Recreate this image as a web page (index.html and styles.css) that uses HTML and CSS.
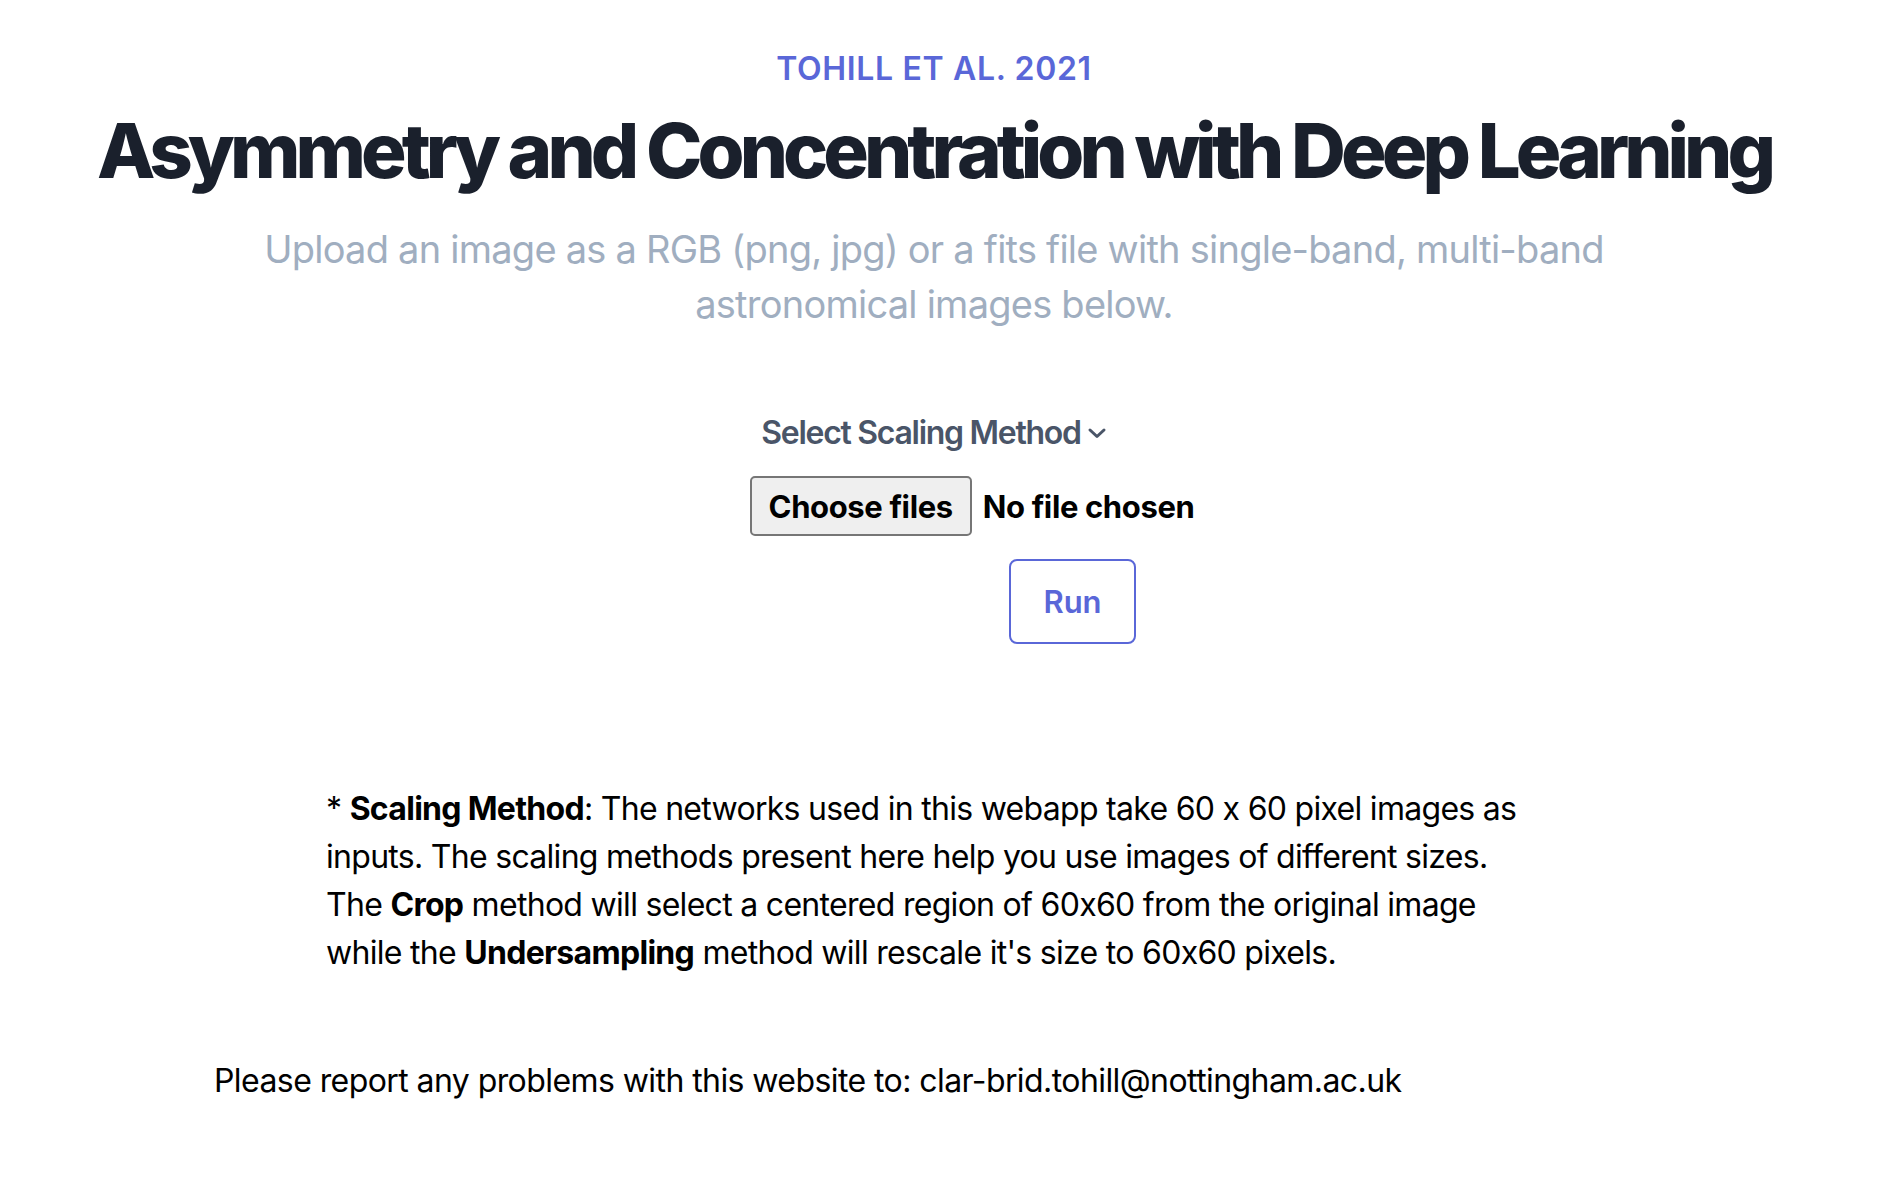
FILE: index.html
```html
<!DOCTYPE html>
<html lang="en">
<head>
<meta charset="utf-8">
<title>Asymmetry and Concentration with Deep Learning</title>
<link rel="stylesheet" href="styles.css">
</head>
<body>
<main class="page">
  <header class="hero">
    <p class="eyebrow">Tohill et al. 2021</p>
    <h1 class="title">Asymmetry and Concentration with Deep Learning</h1>
    <p class="lead">Upload an image as a RGB (png, jpg) or a fits file with single-band, multi-band astronomical images below.</p>
  </header>

  <form class="controls">
    <div class="select">
      <span class="select-label">Select Scaling Method</span>
      <svg class="chevron" width="20" height="12" viewBox="0 0 20 12" aria-hidden="true"><path d="M3 3l7 6.5 7-6.5" fill="none" stroke="#4a5568" stroke-width="3" stroke-linecap="round" stroke-linejoin="round"/></svg>
    </div>
    <div class="file">
      <span class="file-btn">Choose files</span>
      <span class="file-name">No file chosen</span>
    </div>
    <button type="button" class="run">Run</button>
  </form>

  <p class="note">* <strong>Scaling Method</strong>: The networks used in this webapp take 60 x 60 pixel images as inputs. The scaling methods present here help you use images of different sizes. The <strong>Crop</strong> method will select a centered region of 60x60 from the original image while the <strong>Undersampling</strong> method will rescale it's size to 60x60 pixels.</p>

  <p class="footer">Please report any problems with this website to: clar-brid.tohill@nottingham.ac.uk</p>
</main>
</body>
</html>
```

FILE: styles.css
```css
html, body {
  margin: 0;
  padding: 0;
  background: #ffffff;
}

body {
  font-family: Inter, "Liberation Sans", sans-serif;
  font-feature-settings: "calt" 0;
  color: #000000;
}

.page {
  padding: 45px 10px 0 0;
}

.hero {
  display: flex;
  flex-direction: column;
  align-items: center;
  text-align: center;
}

.eyebrow {
  margin: 0;
  font-size: 32px;
  line-height: 48px;
  font-weight: 600;
  letter-spacing: 0.02em;
  text-transform: uppercase;
  color: #5a67d8;
}

.title {
  margin: 19px 0 0;
  font-size: 76px;
  line-height: 76px;
  font-weight: 800;
  letter-spacing: -0.065em;
  white-space: nowrap;
  color: #1a202c;
}

.lead {
  margin: 34px 0 0;
  max-width: 1400px;
  font-size: 38px;
  line-height: 55px;
  font-weight: 400;
  letter-spacing: -0.02em;
  color: #a0aec0;
}

.controls {
  display: flex;
  flex-direction: column;
  align-items: center;
  margin-top: 76px;
}

.select {
  display: flex;
  align-items: center;
  gap: 6px;
  height: 48px;
  color: #4a5568;
  font-size: 32px;
  font-weight: 600;
  letter-spacing: -0.04em;
}

.chevron {
  margin-top: 2px;
}

.file {
  display: flex;
  align-items: center;
  gap: 11px;
  margin-top: 20px;
  margin-left: 76px;
  font-size: 31px;
  font-weight: 700;
  letter-spacing: -0.012em;
  color: #000000;
}

.file-btn {
  display: flex;
  align-items: center;
  height: 60px;
  padding: 0 17px;
  box-sizing: border-box;
  background: #efefef;
  border: 2px solid #767676;
  border-radius: 5px;
}

.run {
  margin-top: 23px;
  margin-left: 277px;
  padding: 17px 32px;
  background: #ffffff;
  border: 2px solid #5a67d8;
  border-radius: 8px;
  font-family: inherit;
  font-size: 31px;
  line-height: 47px;
  font-weight: 600;
  color: #5a67d8;
}

.note {
  width: 1222px;
  margin: 141px 0 0 326px;
  font-size: 32px;
  line-height: 48px;
  letter-spacing: -0.022em;
}

.note strong {
  font-weight: 700;
}

.footer {
  margin: 80px 0 0 214px;
  font-size: 32px;
  line-height: 48px;
  letter-spacing: -0.018em;
}
```
